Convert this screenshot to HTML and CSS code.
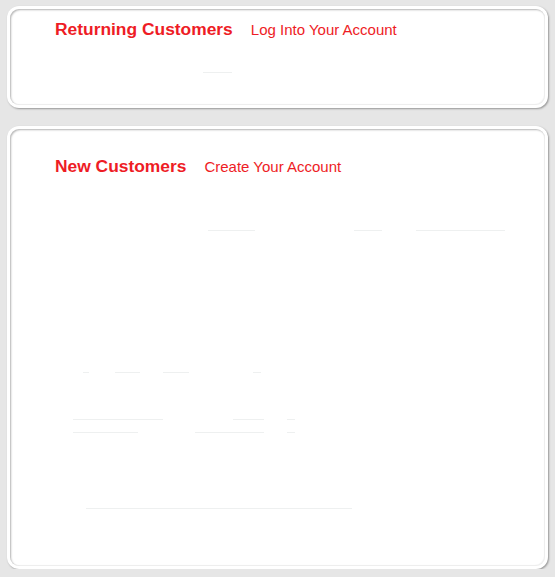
FILE: index.html
```html
<!DOCTYPE html>
<html>
<head>
<meta charset="utf-8">
<link rel="stylesheet" href="styles.css">
</head>
<body>
<div class="page">
  <section class="box box-login">
    <div class="inner">
      <h2 class="heading"><span class="title">Returning Customers</span><span class="sub">Log Into Your Account</span></h2>
      <div class="faint-row login-row"><span class="faint" style="width:29px;margin-left:148px"></span></div>
    </div>
  </section>
  <section class="box box-new">
    <div class="inner">
      <h2 class="heading"><span class="title">New Customers</span><span class="sub">Create Your Account</span></h2>
      <div class="faint-row row-a">
        <span class="faint" style="width:47px;margin-left:153px"></span>
        <span class="faint" style="width:28px;margin-left:99px"></span>
        <span class="faint" style="width:89px;margin-left:34px"></span>
      </div>
      <div class="faint-row row-b">
        <span class="faint" style="width:6px;margin-left:28px"></span>
        <span class="faint" style="width:25px;margin-left:26px"></span>
        <span class="faint" style="width:26px;margin-left:23px"></span>
        <span class="faint" style="width:8px;margin-left:64px"></span>
      </div>
      <div class="faint-row row-c">
        <span class="faint" style="width:90px;margin-left:18px"></span>
        <span class="faint" style="width:31px;margin-left:70px"></span>
        <span class="faint" style="width:8px;margin-left:23px"></span>
      </div>
      <div class="faint-row row-d">
        <span class="faint" style="width:65px;margin-left:18px"></span>
        <span class="faint" style="width:69px;margin-left:57px"></span>
        <span class="faint" style="width:8px;margin-left:23px"></span>
      </div>
      <div class="faint-row row-e">
        <span class="faint" style="width:266px;margin-left:31px"></span>
      </div>
    </div>
  </section>
</div>
</body>
</html>
```

FILE: styles.css
```css
html, body {
  margin: 0;
  padding: 0;
  background: #e6e6e6;
}
.page {
  padding: 6px 0 0 7px;
  display: flex;
  flex-direction: column;
  gap: 18px;
  width: 541px;
}
.box {
  background: #fff;
  border-radius: 12px;
  padding: 3px;
  box-shadow: 1px 1px 2px rgba(0, 0, 0, 0.35);
  box-sizing: border-box;
}
.box-login { height: 102px; }
.box-new { height: 443px; }
.inner {
  height: 100%;
  box-sizing: border-box;
  border-radius: 9px;
  box-shadow: inset 1px 1px 2px rgba(0, 0, 0, 0.3), inset -1px -1px 1px rgba(0, 0, 0, 0.06);
  padding: 10px 0 0 45px;
}
.box-new .inner { padding-top: 27px; }
.heading {
  margin: 0;
  font-family: "Liberation Sans", Arial, sans-serif;
  color: #ee1c25;
  display: flex;
  align-items: baseline;
  gap: 18px;
  line-height: 21px;
  font-weight: normal;
}
.title {
  font-weight: bold;
  font-size: 17.4px;
}
.sub {
  font-size: 15px;
}
.faint-row {
  display: flex;
  height: 1px;
}
.faint {
  display: block;
  height: 1px;
  background: #eef0f0;
}
.login-row { margin-top: 32px; }
.row-a { margin-top: 53px; }
.row-b { margin-top: 141px; }
.row-c { margin-top: 46px; }
.row-d { margin-top: 12px; }
.row-e { margin-top: 75px; }
```
